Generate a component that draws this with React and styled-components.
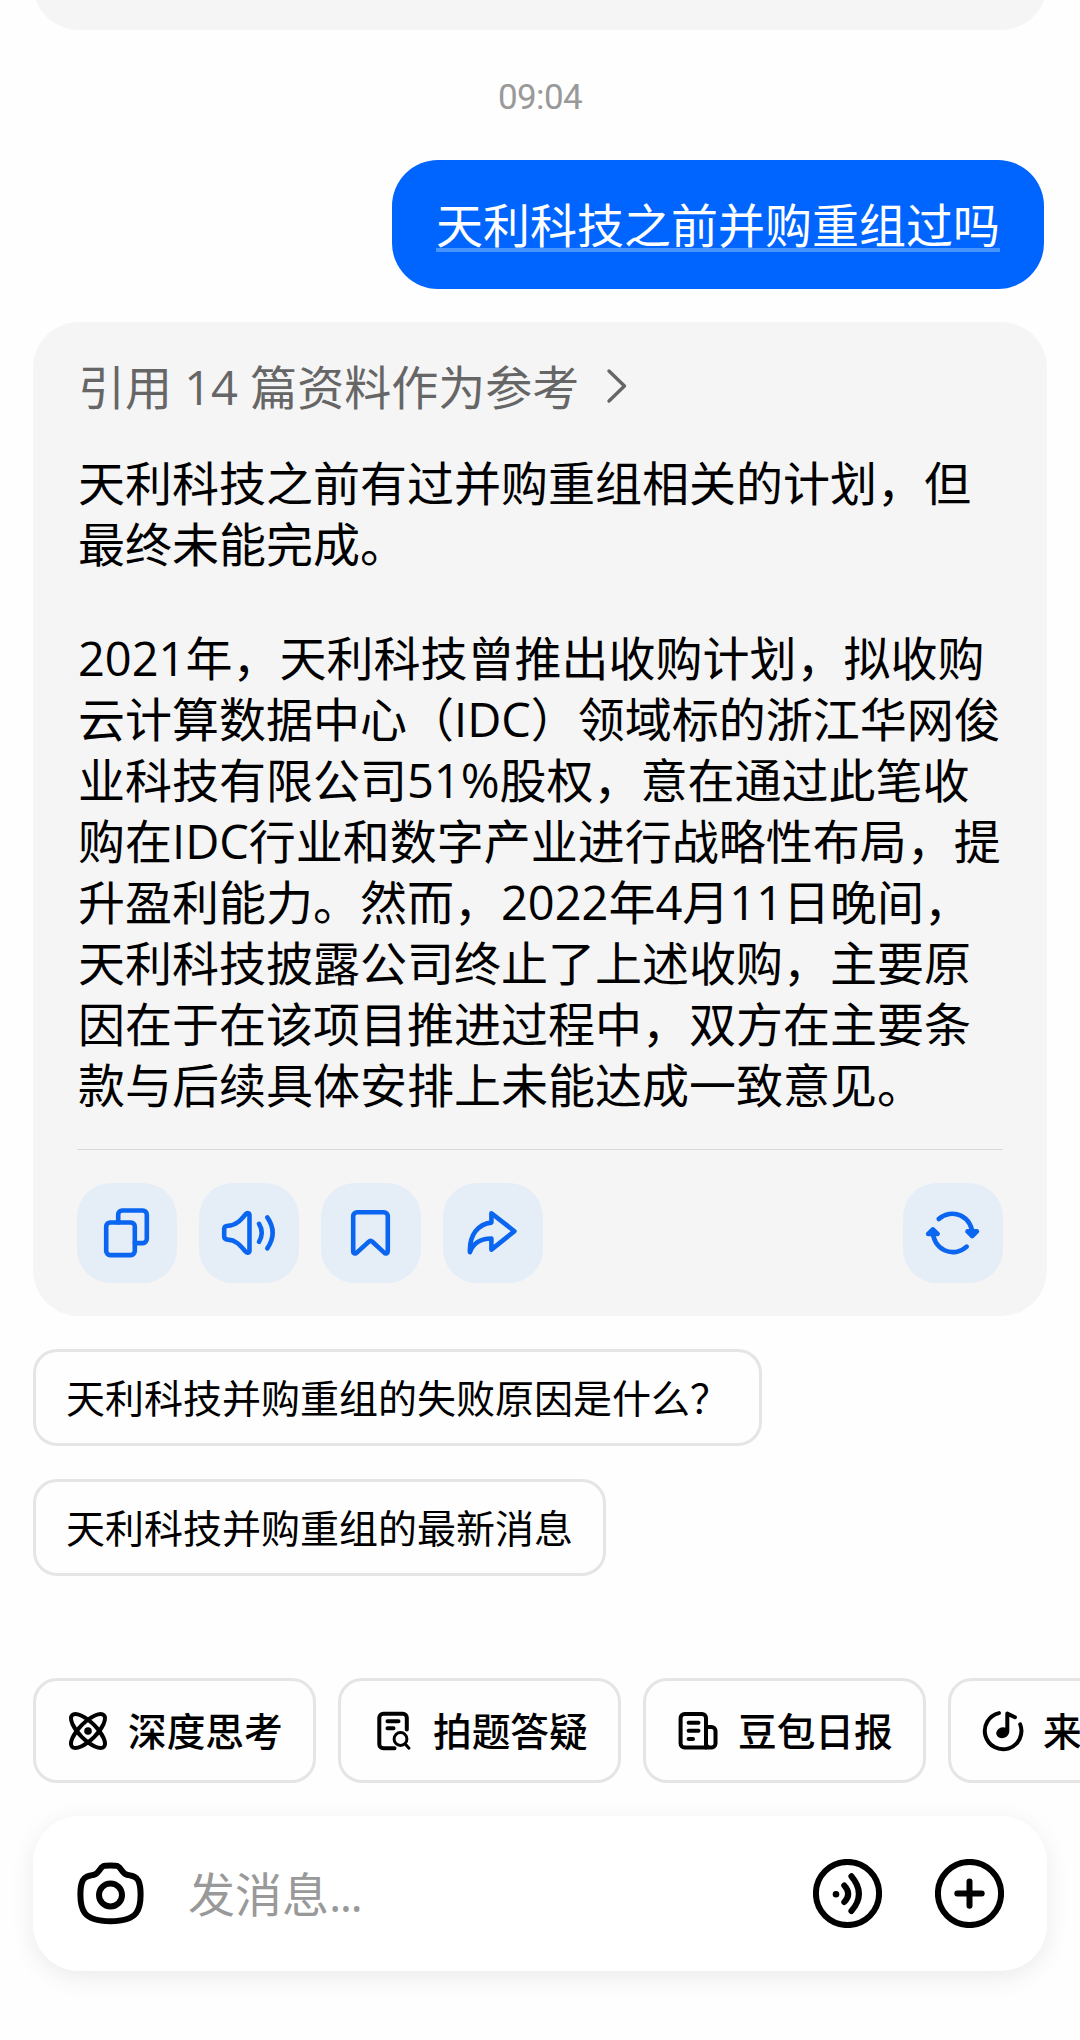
import styled, { createGlobalStyle } from "styled-components"

const paragraphs = [
    [
        "天利科技之前有过并购重组相关的计划，但",
        "最终未能完成。",
    ],
    [
        "2021年，天利科技曾推出收购计划，拟收购",
        "云计算数据中心（IDC）领域标的浙江华网俊",
        "业科技有限公司51%股权，意在通过此笔收",
        "购在IDC行业和数字产业进行战略性布局，提",
        "升盈利能力。然而，2022年4月11日晚间，",
        "天利科技披露公司终止了上述收购，主要原",
        "因在于在该项目推进过程中，双方在主要条",
        "款与后续具体安排上未能达成一致意见。",
    ],
]

const suggestions = ["天利科技并购重组的失败原因是什么？", "天利科技并购重组的最新消息"]

const CopyIcon = () => (
    <ActionSvg viewBox="0 0 100 100">
        <rect x="29.2" y="39.5" width="28.6" height="32.6" rx="4" />
        <path d="M41.2 39.5V31.5a4 4 0 0 1 4-4H65.8a4 4 0 0 1 4 4V56.1a4 4 0 0 1-4 4H57.8" />
    </ActionSvg>
)

const SpeakerIcon = () => (
    <ActionSvg viewBox="0 0 100 100">
        <path d="M29 42.8C37.5 42.4 42 36.5 46.8 31C48.2 29.4 50.5 29.8 50.5 32.2V67.5C50.5 69.8 48.2 70.3 46.8 68.8C42 63.5 37.5 57 29 56.6C26.5 56.4 25.2 55.5 25.2 53.5V46C25.2 43.8 26.5 42.9 29 42.8Z" />
        <path d="M60 40.8Q65.4 49.7 60 58.8" />
        <path d="M68.3 34.4Q79 49.7 68.3 65.4" />
    </ActionSvg>
)

const BookmarkIcon = () => (
    <ActionSvg viewBox="0 0 100 100">
        <path d="M32.2 33.3a4 4 0 0 1 4-4H62.8a4 4 0 0 1 4 4V68.2c0 2.2-2 3-3.6 1.4L51.4 58.8q-1.9-1.8-3.8 0L35.8 69.6c-1.6 1.6-3.6.8-3.6-1.4Z" />
    </ActionSvg>
)

const ShareIcon = () => (
    <ActionSvg viewBox="0 0 100 100">
        <path d="M48.4 30.2L71.4 48.2L48.4 66.6V55.5C38 55.5 30.5 59.5 26.9 69.2C26.2 52 35 41 48.4 39.6Z" />
    </ActionSvg>
)

const RefreshIcon = () => (
    <ActionSvg viewBox="0 0 100 100">
        <path d="M35.7 36A20 20 0 0 1 69.2 52" />
        <path d="M64.5 48.4L69.2 53L73.9 48.4Z" />
        <path d="M63.7 63.7A20 20 0 0 1 30 48" />
        <path d="M25.2 51L29.9 46.4L34.6 51Z" />
    </ActionSvg>
)

const AtomIcon = () => (
    <ChipSvg viewBox="0 0 44 44">
        <ellipse cx="22" cy="22" rx="22.4" ry="8.6" transform="rotate(45 22 22)" />
        <ellipse cx="22" cy="22" rx="22.4" ry="8.6" transform="rotate(-45 22 22)" />
        <circle cx="22" cy="22" r="3.8" fill="#000" stroke="none" />
    </ChipSvg>
)

const DocSearchIcon = () => (
    <ChipSvg viewBox="0 0 44 44">
        <path d="M23.5 39.2H12.3a4 4 0 0 1-4-4V8.8a4 4 0 0 1 4-4H31.8a4 4 0 0 1 4 4V20.5" />
        <path d="M16.5 12.3H27.5M16.5 19.3H22.5" />
        <circle cx="29.5" cy="30" r="6.4" strokeWidth="3" />
        <path d="M34.2 35L38 39.2" strokeWidth="3" />
    </ChipSvg>
)

const NewsIcon = () => (
    <ChipSvg viewBox="0 0 44 44">
        <path d="M35 38.5H8.6a4 4 0 0 1-4-4V9a4 4 0 0 1 4-4H26a4 4 0 0 1 4 4V34.5a4.7 4 0 0 0 9.5 0V22a4 4 0 0 0-4-4H30" />
        <path d="M30 30V38.5" />
        <path d="M12.6 13.7H22.5M12.6 21.7H22.5M12.6 30H17" />
    </ChipSvg>
)

const MusicIcon = () => (
    <ChipSvg viewBox="0 0 44 44">
        <path d="M18 4.1A18.3 18.3 0 1 0 39.2 15.4" />
        <path d="M26.3 23V4.6L34 8.2" />
        <ellipse cx="21.6" cy="23.7" rx="6.4" ry="5.4" fill="#000" stroke="none" transform="rotate(-18 21.6 23.7)" />
    </ChipSvg>
)

const CameraIcon = () => (
    <BarSvg width="67" height="66" viewBox="0 0 67 66">
        <path d="M33.5 4.4C37 4.4 39 4.4 40.6 5.1C44.6 7 45 12.6 50 13.7C55 14.8 58.8 15 61.2 19.4C63 23 63.6 28 63.6 33.5C63.6 40 63 47 59.2 52C54 58.8 43.5 60.2 33.5 60.2C23.5 60.2 13 58.8 7.8 52C4 47 3.4 40 3.4 33.5C3.4 28 4 23 5.8 19.4C8.2 15 12 14.8 17 13.7C22 12.6 22.4 7 26.4 5.1C28 4.4 30 4.4 33.5 4.4Z" />
        <circle cx="33.5" cy="34" r="11.5" />
    </BarSvg>
)

const VoiceIcon = () => (
    <BarSvg width="69" height="69" viewBox="0 0 69 69">
        <circle cx="34.5" cy="34.5" r="31.6" />
        <circle cx="23" cy="35.2" r="3.3" fill="#000" stroke="none" />
        <path d="M31.3 26.5Q39 35 31.3 43" />
        <path d="M38.4 17.2Q53.4 35 38.4 52" />
    </BarSvg>
)

const PlusIcon = () => (
    <BarSvg width="69" height="69" viewBox="0 0 69 69">
        <circle cx="34.5" cy="34.5" r="31.6" />
        <path d="M22.3 34.6H46.7M34.5 22.4V46.8" />
    </BarSvg>
)

const chips = [
    { title: "深度思考", Icon: AtomIcon },
    { title: "拍题答疑", Icon: DocSearchIcon },
    { title: "豆包日报", Icon: NewsIcon },
    { title: "来", Icon: MusicIcon },
]

const App = () => {
    return (
        <Screen>
            <GlobalStyle />
            <PreviousAnswer />
            <Time>09:04</Time>
            <Question>
                <span>天利科技之前并购重组过吗</span>
            </Question>
            <Answer>
                <References>
                    引用 14 篇资料作为参考
                    <Chevron viewBox="0 0 22 36">
                        <path d="M3 3L18.5 18L3 33" />
                    </Chevron>
                </References>
                {paragraphs.map((lines, index) => (
                    <Paragraph key={index}>
                        {lines.map((line) => <Line key={line}>{line}</Line>)}
                    </Paragraph>
                ))}
                <Actions>
                    <ActionButton><CopyIcon /></ActionButton>
                    <ActionButton><SpeakerIcon /></ActionButton>
                    <ActionButton><BookmarkIcon /></ActionButton>
                    <ActionButton><ShareIcon /></ActionButton>
                    <ActionButton $last><RefreshIcon /></ActionButton>
                </Actions>
            </Answer>
            <Suggestions>
                {suggestions.map((text) => <Suggestion key={text}>{text}</Suggestion>)}
            </Suggestions>
            <Chips>
                {chips.map(({ title, Icon }) => (
                    <Chip key={title}>
                        <Icon />
                        {title}
                    </Chip>
                ))}
            </Chips>
            <InputBar>
                <CameraIcon />
                <Placeholder>发消息<Dots>...</Dots></Placeholder>
                <VoiceIcon />
                <PlusIcon />
            </InputBar>
        </Screen>
    )
}
export default App

const GlobalStyle = createGlobalStyle`
* {
box-sizing: border-box;
}
body {
margin: 0;
background: #fefefe;
overflow: hidden;
}
`
const Screen = styled.main`
display: flex;
flex-direction: column;
width: 1080px;
height: 2040px;
padding: 0 33px;
overflow: hidden;
background: #fefefe;
color: #000;
font-family: 'Open Sans', 'Noto Sans CJK SC', sans-serif;
font-size: 47px;
white-space: nowrap;
`
const PreviousAnswer = styled.div`
flex: none;
height: 100px;
margin-top: -70px;
border-radius: 46px;
background: #f5f5f5;
`
const Time = styled.time`
height: 130px;
padding-top: 3px;
line-height: 130px;
text-align: center;
font-family: 'Roboto', sans-serif;
font-size: 35px;
letter-spacing: -0.6px;
color: #999;
`
const Question = styled.div`
display: flex;
align-items: center;
align-self: flex-end;
height: 129px;
margin-right: 3px;
padding: 0 44px;
border-radius: 46px;
background: #0065ff;
color: #fff;
span {
height: 54px;
line-height: 54px;
border-bottom: 4px solid #4794ff;
}
`
const Answer = styled.section`
display: flex;
flex-direction: column;
height: 994px;
margin-top: 33px;
padding: 0 44px 33px;
border-radius: 46px;
background: #f5f5f5;
`
const References = styled.div`
display: flex;
align-items: center;
height: 61px;
margin-top: 32px;
margin-bottom: 38px;
padding-left: 1px;
color: #666;
`
const Chevron = styled.svg`
width: 22px;
height: 36px;
margin: 2px 0 0 27px;
fill: none;
stroke: #666;
stroke-width: 3.4;
stroke-linecap: round;
stroke-linejoin: round;
`
const Paragraph = styled.p`
margin: 0;
& + & {
margin-top: 53px;
}
`
const Line = styled.span`
display: block;
height: 61px;
padding-left: 1px;
line-height: 61px;
`
const Actions = styled.div`
display: flex;
gap: 22px;
margin-top: auto;
padding-top: 33px;
border-top: 1px solid #d9d9d9;
`
const ActionButton = styled.button`
width: 100px;
height: 100px;
padding: 0;
border: none;
border-radius: 34px;
background: #e5edf7;
margin-left: ${({ $last }) => ($last ? 'auto' : '0')};
`
const ActionSvg = styled.svg`
display: block;
width: 100px;
height: 100px;
fill: none;
stroke: #0a65f0;
stroke-width: 4.6;
stroke-linecap: round;
stroke-linejoin: round;
`
const Suggestions = styled.div`
display: flex;
flex-direction: column;
align-items: flex-start;
gap: 33px;
margin-top: 33px;
`
const Suggestion = styled.button`
height: 97px;
padding: 0 30px;
border: 3px solid #e5e5e5;
border-radius: 24px;
background: #fefefe;
color: #000;
font-family: inherit;
font-size: 39px;
line-height: 56px;
`
const Chips = styled.div`
display: flex;
gap: 22px;
margin-top: 102px;
`
const Chip = styled.button`
display: flex;
flex: none;
align-items: center;
gap: 18px;
width: 283px;
height: 105px;
padding: 0 0 0 30px;
border: 3px solid #e5e5e5;
border-radius: 24px;
background: #fefefe;
color: #000;
font-family: inherit;
font-size: 38.7px;
font-weight: 500;
line-height: 56px;
`
const ChipSvg = styled.svg`
width: 44px;
height: 44px;
fill: none;
stroke: #000;
stroke-width: 4;
stroke-linecap: round;
stroke-linejoin: round;
`
const InputBar = styled.div`
display: flex;
align-items: center;
height: 155px;
margin-top: 33px;
padding: 0 43px 0 44px;
border-radius: 46px;
background: #fff;
box-shadow: 0 6px 24px rgba(0, 0, 0, 0.08);
`
const BarSvg = styled.svg`
flex: none;
fill: none;
stroke: #000;
stroke-width: 6;
stroke-linecap: round;
stroke-linejoin: round;
& + & {
margin-left: 53px;
}
`
const Placeholder = styled.div`
flex: 1;
margin-left: 44px;
line-height: 60px;
color: #999;
`
const Dots = styled.span`
letter-spacing: -1.6px;
`
